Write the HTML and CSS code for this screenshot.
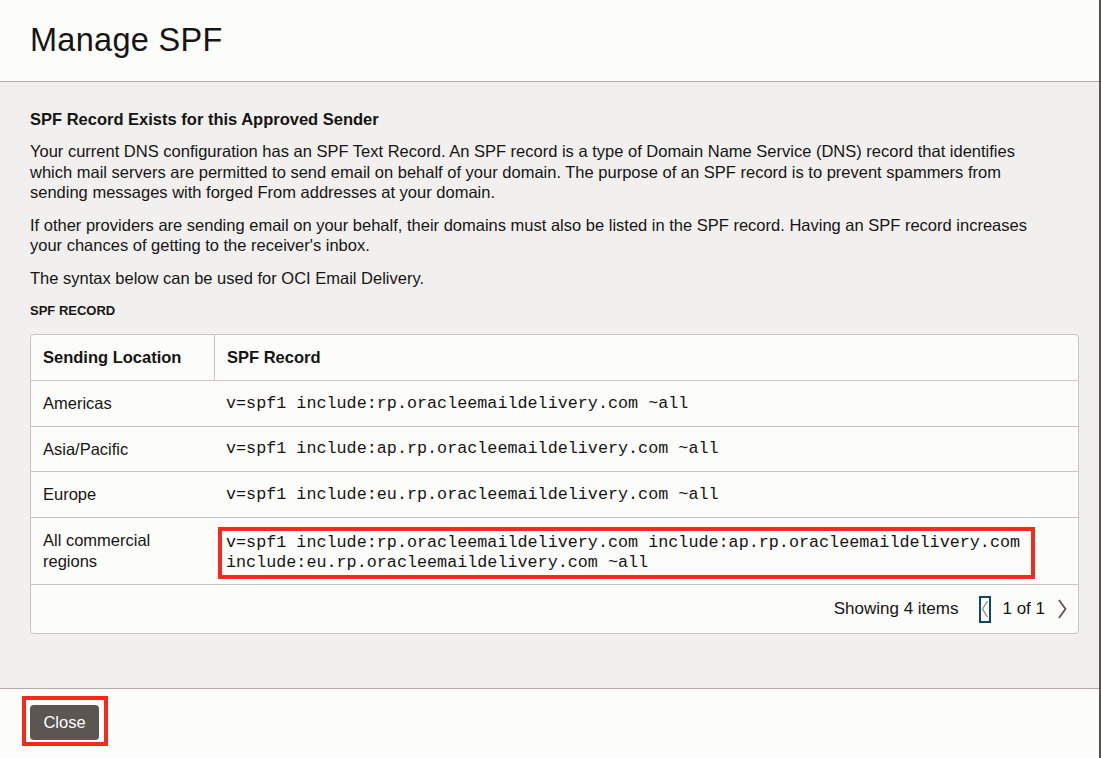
FILE: index.html
```html
<!DOCTYPE html>
<html lang="en">
<head>
<meta charset="utf-8">
<title>Manage SPF</title>
<link rel="stylesheet" href="styles.css">
</head>
<body>
<div class="dialog">
  <header class="dlg-header">
    <h1 class="dlg-title">Manage SPF</h1>
  </header>
  <main class="dlg-body">
    <h2 class="section-title">SPF Record Exists for this Approved Sender</h2>
    <p class="para">Your current DNS configuration has an SPF Text Record. An SPF record is a type of Domain Name Service (DNS) record that identifies which mail servers are permitted to send email on behalf of your domain. The purpose of an SPF record is to prevent spammers from sending messages with forged From addresses at your domain.</p>
    <p class="para">If other providers are sending email on your behalf, their domains must also be listed in the SPF record. Having an SPF record increases your chances of getting to the receiver's inbox.</p>
    <p class="para">The syntax below can be used for OCI Email Delivery.</p>
    <div class="label">SPF RECORD</div>
    <div class="table-card">
      <div class="row head">
        <div class="cell c1">Sending Location</div>
        <div class="cell c2 sep">SPF Record</div>
      </div>
      <div class="row">
        <div class="cell c1">Americas</div>
        <div class="cell c2 mono">v=spf1 include:rp.oracleemaildelivery.com ~all</div>
      </div>
      <div class="row short">
        <div class="cell c1">Asia/Pacific</div>
        <div class="cell c2 mono">v=spf1 include:ap.rp.oracleemaildelivery.com ~all</div>
      </div>
      <div class="row">
        <div class="cell c1">Europe</div>
        <div class="cell c2 mono">v=spf1 include:eu.rp.oracleemaildelivery.com ~all</div>
      </div>
      <div class="row tall">
        <div class="cell c1">All commercial<br>regions</div>
        <div class="cell c2 hl-cell"><div class="mono highlight">v=spf1 include:rp.oracleemaildelivery.com include:ap.rp.oracleemaildelivery.com<br>include:eu.rp.oracleemaildelivery.com ~all</div></div>
      </div>
      <div class="pager">
        <span class="count">Showing 4 items</span>
        <span class="prev"><svg width="10" height="24" viewBox="0 0 10 24"><path d="M8 2 L2 12 L8 22" fill="none" stroke="#8a8580" stroke-width="1.5"/></svg></span>
        <span class="pages">1 of 1</span>
        <span class="next"><svg width="10" height="20" viewBox="0 0 10 20"><path d="M2 1 L8.5 10 L2 19" fill="none" stroke="#5b5651" stroke-width="1.8"/></svg></span>
      </div>
    </div>
  </main>
  <footer class="dlg-footer">
    <div class="btn-mark"><button class="btn">Close</button></div>
  </footer>
</div>
</body>
</html>
```

FILE: styles.css
```css
* { box-sizing: border-box; }
html, body { margin: 0; padding: 0; }
body {
  font-family: "Liberation Sans", Arial, Helvetica, sans-serif;
  color: #161513;
  background: #fcfcfb;
}
.dialog {
  height: 758px;
  display: flex;
  flex-direction: column;
  border-right: 2px solid #55524f;
}
.dlg-header {
  height: 82px;
  flex: none;
  display: flex;
  align-items: center;
  padding-left: 30px;
  background: #fcfcfb;
  border-bottom: 1px solid #b3ada6;
}
.dlg-title {
  margin: 0;
  font-size: 32.5px;
  font-weight: 400;
  letter-spacing: 0.3px;
}
.dlg-body {
  flex: 1;
  background: #f1f0ef;
  padding: 27px 20px 0 30px;
}
.section-title {
  margin: 0;
  font-size: 16.5px;
  line-height: 20px;
  font-weight: 700;
}
.para {
  margin: 12px 0 0;
  max-width: 1020px;
  font-size: 16.5px;
  line-height: 20.5px;
}
.label {
  margin-top: 15px;
  font-size: 13px;
  line-height: 16px;
  font-weight: 700;
}
.table-card {
  margin-top: 15px;
  width: 1049px;
  background: #fcfcfb;
  border: 1px solid #c8c4bf;
  border-radius: 4px;
}
.row {
  display: flex;
  border-bottom: 1px solid #c8c4bf;
  height: 46px;
}
.row.short { height: 45px; }
.row.tall { height: 67px; }
.cell {
  padding: 0 12px;
  display: flex;
  align-items: center;
  font-size: 16.5px;
  line-height: 21px;
}
.c1 { width: 183px; flex: none; }
.c2 { flex: 1; }
.sep { border-left: 1px solid #c8c4bf; }
.head .cell { font-weight: 700; }
.mono {
  font-family: "Liberation Mono", "Courier New", monospace;
  font-size: 16.75px;
  line-height: 20px;
}
.hl-cell {
  padding-left: 4px;
  padding-top: 9px;
  align-items: flex-start;
}
.highlight {
  width: max-content;
  border: 4px solid #f52a1c;
  padding: 2px 11px 2px 4px;
}
.pager {
  height: 48px;
  display: flex;
  align-items: center;
  justify-content: flex-end;
  padding-right: 11px;
  font-size: 17px;
}
.count { margin-right: 21px; }
.prev {
  width: 12px;
  height: 27px;
  border: 2px solid #0e4a5e;
  display: flex;
  align-items: center;
  justify-content: center;
  margin-right: 11px;
}
.prev svg { display: block; }
.pages { margin-right: 12px; }
.next svg { display: block; }
.dlg-footer {
  height: 70px;
  flex: none;
  background: #fcfcfb;
  border-top: 1px solid #b3ada6;
  padding: 7px 0 0 22px;
}
.btn-mark {
  display: inline-block;
  border: 4px solid #f52a1c;
  padding: 5px 5px 2px 4px;
}
.btn {
  display: block;
  width: 69px;
  height: 35px;
  background: #5b5651;
  color: #ffffff;
  border: none;
  border-radius: 4px;
  font-family: "Liberation Sans", Arial, sans-serif;
  font-size: 16.5px;
  padding: 0;
}
```
